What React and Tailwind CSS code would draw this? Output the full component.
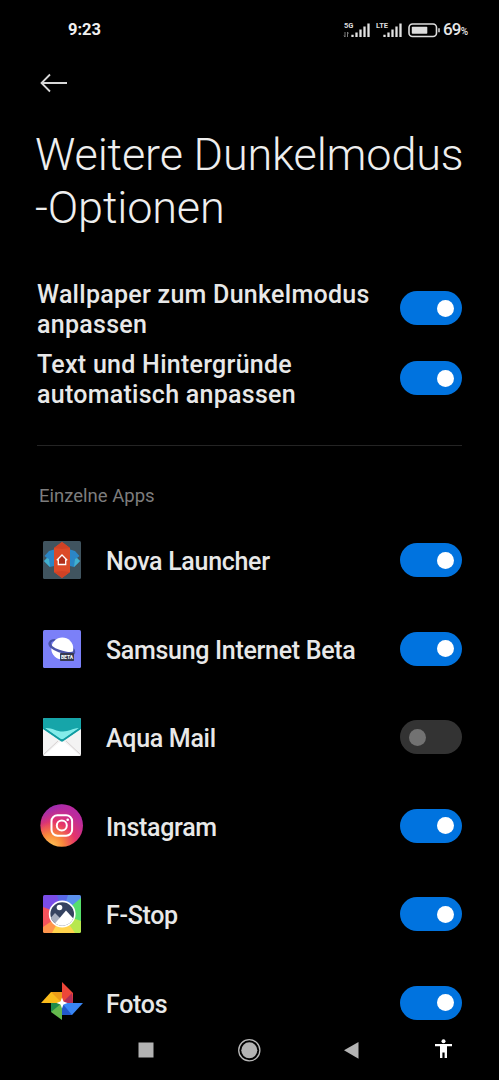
import React, { useState } from "react";

const NovaIcon = () => (
  <svg viewBox="0 0 38 38" className="w-[38px] h-[38px]">
    <rect width="38" height="38" rx="1.5" fill="#40545f" />
    <path d="M11 8.5L6 10l-4.500 5 2.500 2-3 3 6 6 4-1z" fill="#2b86c6" />
    <path d="M27 8.500l5 1.500 4.500 5-2.500 2 3 3-6 6-4-1z" fill="#2b86c6" />
    <path d="M4 17l-3 3 6 6-1-8zM34 17l3 3-6 6 1-8z" fill="#41b1cf" />
    <path d="M19 1l8 6v24l-8 6-8-6V7z" fill="#dc4a28" />
    <path d="M19 1l8 6-8 1-8-1zM11 31l8-1 8 1-8 6z" fill="#d04225" />
    <path d="M19 14.500l4 4v5h-8v-5z" fill="#b02f1c" />
    <path
      d="M13.800 19.200l5.200-5.200 5.200 5.200M15.300 18.500v5h7.400v-5"
      fill="none"
      stroke="#fff"
      strokeWidth="1.300"
    />
  </svg>
);

const SamsungIcon = () => (
  <svg viewBox="0 0 38 38" className="w-[38px] h-[38px]">
    <rect width="38" height="38" rx="1.5" fill="#7b80f8" />
    <ellipse
      cx="19"
      cy="17.500"
      rx="13"
      ry="5.500"
      transform="rotate(24 19 17.500)"
      fill="none"
      stroke="#4450a8"
      strokeWidth="2.200"
    />
    <circle cx="19.300" cy="18.500" r="11" fill="#fff" />
    <path
      d="M7 12.500c-1.500 3 3 6.500 9 8.500s13 3.500 15.500 1"
      fill="none"
      stroke="#4b54a8"
      strokeWidth="2.600"
    />
    <rect x="17" y="23" width="14" height="8" rx=".7" fill="#363a50" />
    <text
      x="24"
      y="28.900"
      textAnchor="middle"
      fontSize="5"
      fontWeight="700"
      fill="#fff"
      fontFamily="Roboto, sans-serif"
    >
      BETA
    </text>
  </svg>
);

const AquaMailIcon = () => (
  <svg viewBox="0 0 38 38" className="w-[38px] h-[38px]">
    <rect width="38" height="38" rx="1.500" fill="#f3f3f3" />
    <path d="M0 11V1.500Q0 0 1.500 0h35Q38 0 38 1.500V11L19 24z" fill="#16a5a9" />
    <path d="M2 10c7-.5 11 3.500 18 3.500 6 0 9-3 16-3.500L21 20.500q-2 1.500-4 0z" fill="#83ecea" />
    <path d="M1 10.500l16 11q2 1.300 4 0l16-11" fill="none" stroke="#109aa0" strokeWidth="1.400" />
    <path d="M0 37l15-14M38 37L23 23" stroke="#d2cccc" strokeWidth=".9" />
    <path d="M1 37.500l15-13q3-1.500 6 0l15 13z" fill="#fff" />
  </svg>
);

const InstagramIcon = () => (
  <svg viewBox="0 0 44 44" className="w-11 h-11">
    <defs>
      <radialGradient id="igWarm" cx="25%" cy="100%" r="95%">
        <stop offset="0" stopColor="#fec858" />
        <stop offset=".3" stopColor="#f9893b" />
        <stop offset=".62" stopColor="#e5356a" />
        <stop offset="1" stopColor="#b92aa0" />
      </radialGradient>
      <linearGradient id="igCool" x1="0" y1="0" x2=".6" y2=".8">
        <stop offset="0" stopColor="#6b36d0" stopOpacity=".9" />
        <stop offset=".5" stopColor="#a02bb0" stopOpacity="0" />
      </linearGradient>
    </defs>
    <circle cx="21.700" cy="21.500" r="21.300" fill="url(#igWarm)" />
    <circle cx="21.700" cy="21.500" r="21.300" fill="url(#igCool)" />
    <g fill="none" stroke="#fff" strokeWidth="2">
      <rect x="11.500" y="11.200" width="20.600" height="20.600" rx="6" />
      <circle cx="21.800" cy="21.500" r="5" />
    </g>
    <circle cx="27.700" cy="15.700" r="1.300" fill="#fff" />
  </svg>
);

const FStopIcon = () => (
  <svg viewBox="0 0 38 38" className="w-[38px] h-[38px]">
    <defs>
      <clipPath id="fsSquare">
        <rect width="38" height="38" rx="1.500" />
      </clipPath>
      <clipPath id="fsCircle">
        <circle cx="19.200" cy="19" r="11.800" />
      </clipPath>
    </defs>
    <g clipPath="url(#fsSquare)">
      <path d="M0 0h28L19 19 0 13z" fill="#7a4de8" />
      <path d="M14 0h12L19 19z" fill="#5868e8" />
      <path d="M25 0h13v11L19 19z" fill="#5b90ed" />
      <path d="M38 3v24L19 19 32 8z" fill="#56e06c" />
      <path d="M38 26v12H28l-9-19z" fill="#b7e84e" />
      <path d="M32 38H6l13-19z" fill="#ffd34c" />
      <path d="M0 27v11h9l10-19z" fill="#ff954d" />
      <path d="M0 12l19 7L0 32z" fill="#f4525c" />
    </g>
    <circle cx="19.200" cy="19" r="13.400" fill="#fff" />
    <g clipPath="url(#fsCircle)">
      <rect x="6" y="7" width="26" height="26" fill="#354360" />
      <path d="M5 26l7-8 5 5-5 9H5z" fill="#a7afbf" />
      <path d="M9 32l14-16.500 11 12v6H9z" fill="#fff" />
    </g>
    <circle cx="16.500" cy="12.500" r="2.800" fill="#fff" />
  </svg>
);

const PhotosIcon = () => (
  <svg viewBox="0 0 44 44" className="w-11 h-11">
    <path d="M22 22V1l11 11v10z" fill="#ed4639" />
    <path d="M22 22l10-10 1 10z" fill="#b32c55" />
    <path d="M22 22H1l10-11h11z" fill="#fbbc1c" />
    <path d="M22 22L11 11h11z" fill="#ed9c18" />
    <path d="M22 22v17L11 31v-9z" fill="#65b94d" />
    <path d="M22 22L11 31v-9z" fill="#218b49" />
    <path d="M22 22h21L32 34H22z" fill="#3986f4" />
    <path d="M22 22l10 12H22z" fill="#2158c9" />
    <path d="M22 16.500l1.500 4 4 1.500-4 1.500-1.500 4-1.500-4-4-1.500 4-1.500z" fill="#fff" />
  </svg>
);

const Signal = ({ label, data }) => (
  <svg viewBox="0 0 27 17" className="w-[27px] h-[17px] overflow-visible">
    <text
      x="1"
      y="5.700"
      fontSize="7.500"
      fontWeight="700"
      fill="#ddd"
      fontFamily="Roboto, sans-serif"
    >
      {label}
    </text>
    {data && <path d="M2 10v5M1 13.500l1 1.500M4.500 15v-5M4.500 10l1 1.500" stroke="#888" strokeWidth=".9" />}
    <path
      d="M9.500 15v-2.200M13.500 15v-4.500M17.500 15V7.500M21.500 15V4.500M25.500 15V1.500"
      stroke="#e2e2e2"
      strokeWidth="2.300"
    />
  </svg>
);

const StatusBar = () => (
  <div className="h-[60px] flex items-center justify-between pl-[68px] pr-[31px] shrink-0">
    <span className="text-[16.5px] font-bold text-[#f0f0f0]">9:23</span>
    <div className="flex items-center">
      <Signal label="5G" data />
      <div className="w-[5px]" />
      <Signal label="LTE" />
      <svg viewBox="0 0 32 15" className="w-8 h-[15px] ml-1.5">
        <rect x="1" y="1" width="27.500" height="12.500" rx="3.500" fill="none" stroke="#ddd" strokeWidth="1.600" />
        <rect x="3.800" y="3.800" width="15.500" height="7" rx=".7" fill="#ddd" />
        <path d="M31 5.300v4" stroke="#ddd" strokeWidth="1.500" />
      </svg>
      <span className="text-[17px] tracking-[-0.8px] font-medium text-[#e6e6e6] ml-[3px]">
        69<span className="text-[10px] font-medium tracking-normal">%</span>
      </span>
    </div>
  </div>
);

const Toggle = ({ on, onClick }) => (
  <button
    role="switch"
    aria-checked={on}
    onClick={onClick}
    className={`w-[62px] h-[34px] rounded-full flex items-center shrink-0 px-[8.5px] ${
      on ? "bg-[#0073df] justify-end" : "bg-[#333333] justify-start"
    }`}
  >
    <span className={`w-[17px] h-[17px] rounded-full ${on ? "bg-white" : "bg-[#727272]"}`} />
  </button>
);

const NavBar = () => (
  <div className="h-[59px] shrink-0 bg-black">
    <svg viewBox="0 0 499 59" className="w-full h-full">
      <rect x="138.500" y="21.500" width="15" height="15" fill="#b3b3b3" />
      <circle cx="249.300" cy="29.300" r="10.600" fill="none" stroke="#b8b8b8" strokeWidth="1.300" />
      <circle cx="249.300" cy="29.300" r="8" fill="#b3b3b3" />
      <path d="M344 29.300L358.500 21v16.800z" fill="#b3b3b3" />
      <circle cx="443.500" cy="20.200" r="2" fill="#fff" />
      <path d="M435 23h17v2.300h-5V37h-2.400v-5.500h-2.200V37H440V25.300h-5z" fill="#fff" />
    </svg>
  </div>
);

const settings = [
  { id: "wallpaper", lines: ["Wallpaper zum Dunkelmodus", "anpassen"] },
  { id: "text", lines: ["Text und Hintergründe", "automatisch anpassen"] },
];

const apps = [
  { id: "nova", name: "Nova Launcher", Icon: NovaIcon },
  { id: "samsung", name: "Samsung Internet Beta", Icon: SamsungIcon },
  { id: "aqua", name: "Aqua Mail", Icon: AquaMailIcon },
  { id: "instagram", name: "Instagram", Icon: InstagramIcon },
  { id: "fstop", name: "F-Stop", Icon: FStopIcon },
  { id: "fotos", name: "Fotos", Icon: PhotosIcon },
];

const App = () => {
  const [enabled, setEnabled] = useState({
    wallpaper: true,
    text: true,
    nova: true,
    samsung: true,
    aqua: false,
    instagram: true,
    fstop: true,
    fotos: true,
  });

  const toggle = (id) => setEnabled((prev) => ({ ...prev, [id]: !prev[id] }));

  return (
    <div className="w-full h-[1080px] bg-black flex flex-col overflow-hidden font-[Roboto,sans-serif]">
      <StatusBar />
      <main className="flex-1 min-h-0 overflow-hidden">
        <div className="h-[46px] pl-10 flex items-center">
          <svg viewBox="0 0 28 20" className="w-7 h-5">
            <path
              d="M27 10H1.500M10 1.500L1.500 10l8.500 8.500"
              fill="none"
              stroke="#d8d8d8"
              strokeWidth="1.800"
            />
          </svg>
        </div>
        <h1 className="mt-[22px] pl-[35px] text-[45px] leading-[53px] tracking-[-0.15px] font-light text-[#eeeeee] whitespace-nowrap">
          Weitere Dunkelmodus
          <br />
          -Optionen
        </h1>

        <div className="mt-[39px] pl-[37px] pr-[37px]">
          {settings.map(({ id, lines }) => (
            <div key={id} className="h-[70px] flex items-center justify-between">
              <p className="pt-[3px] text-[25px] leading-[29.5px] tracking-[0.27px] font-medium text-[#e8e8e8] whitespace-nowrap">
                {lines[0]}
                <br />
                {lines[1]}
              </p>
              <Toggle on={enabled[id]} onClick={() => toggle(id)} />
            </div>
          ))}
        </div>

        <div className="mx-[37px] mt-8 h-px bg-[#242424]" />

        <h2 className="mt-[37px] ml-[39px] h-[26px] leading-[26px] text-[18.5px] text-[#7d7d7d]">
          Einzelne Apps
        </h2>
        <div className="mt-[7px]">
          {apps.map(({ id, name, Icon }) => (
            <div key={id} className="h-[88.5px] pl-10 pr-[37px] flex items-center">
              <div className="w-11 flex justify-center shrink-0">
                <Icon />
              </div>
              <span className="flex-1 ml-[22px] pt-[3px] text-[25px] tracking-[-0.3px] font-medium text-[#e8e8e8] whitespace-nowrap">
                {name}
              </span>
              <Toggle on={enabled[id]} onClick={() => toggle(id)} />
            </div>
          ))}
        </div>
      </main>
      <NavBar />
    </div>
  );
};

export default App;
